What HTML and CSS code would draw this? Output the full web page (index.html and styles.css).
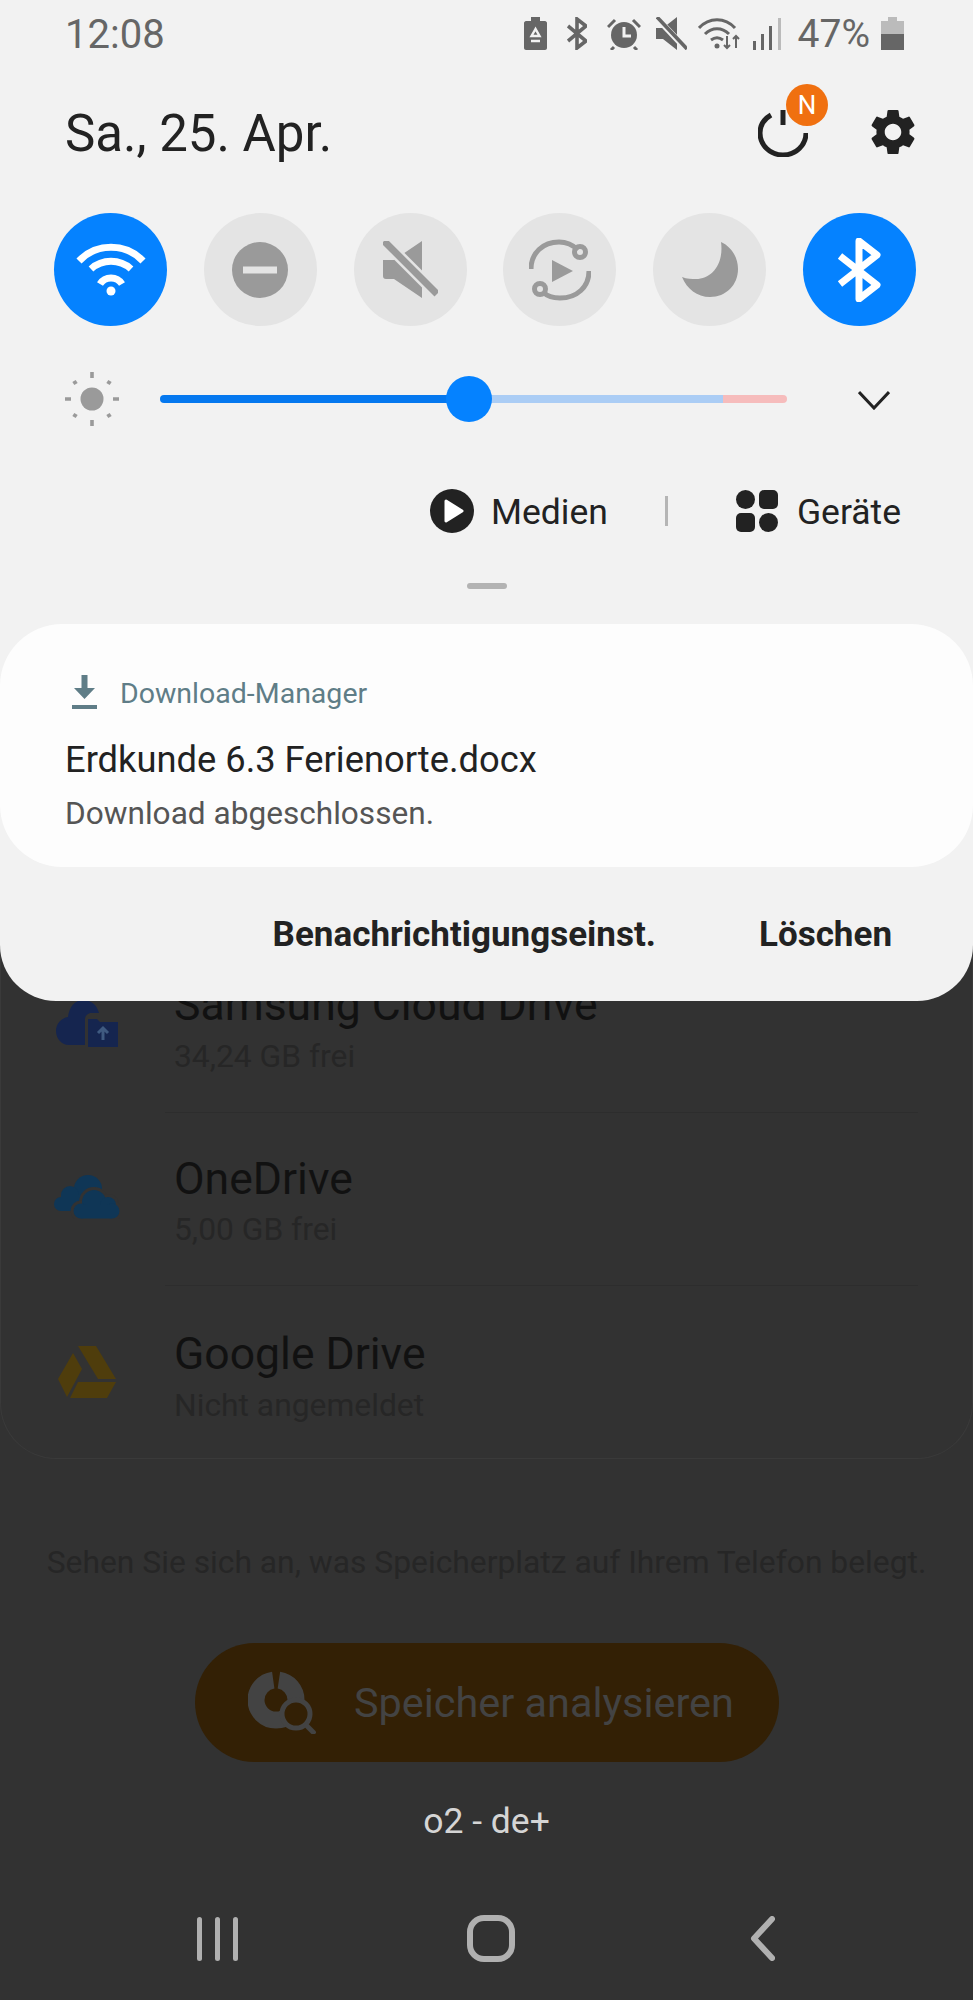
FILE: index.html
```html
<!DOCTYPE html>
<html lang="de">
<head>
  <meta charset="UTF-8" />
  <meta name="viewport" content="width=device-width, initial-scale=1" />
  <title>Benachrichtigungen</title>
  <link rel="stylesheet" href="styles.css">
</head>
<body>
  <!-- dimmed app behind the panel -->
  <main class="app">
    <section class="storage">
      <div class="row">
        <svg class="row-icon" width="62" height="48" viewBox="0 0 62 48"><path fill="#15254f" d="M27 0c8 0 14 5 16 13h-8c-3 0-6 3-6 6v26H13C6 45 0 39 0 31c0-7 5-13 12-14C13 7 19 0 27 0z"/><path fill="#15254f" d="M32 19h9l3 3h18v25H32z"/><path fill="none" stroke="#3f5a80" stroke-width="3" d="M47 40V29M42 33l5-5 5 5"/></svg>
        <div class="row-body">
          <div class="row-title">Samsung Cloud Drive</div>
          <div class="row-sub">34,24 GB frei</div>
        </div>
      </div>
      <div class="row">
        <svg class="row-icon" width="66" height="44" viewBox="0 0 66 44"><g fill="#0f3656"><circle cx="34" cy="14" r="14"/><circle cx="16" cy="20" r="9"/><circle cx="7" cy="29" r="7"/><rect x="7" y="20" width="30" height="16"/></g><g fill="#323232" stroke="#323232" stroke-width="6"><circle cx="40" cy="27" r="12"/><circle cx="54" cy="30" r="8"/><circle cx="27" cy="36" r="7.500"/><circle cx="58" cy="36" r="7.500"/><rect x="27" y="30" width="31" height="13.500"/></g><g fill="#0f3656"><circle cx="40" cy="27" r="12"/><circle cx="54" cy="30" r="8"/><circle cx="27" cy="36" r="7.500"/><circle cx="58" cy="36" r="7.500"/><rect x="27" y="30" width="31" height="13.500"/></g></svg>
        <div class="row-body">
          <div class="row-title">OneDrive</div>
          <div class="row-sub">5,00 GB frei</div>
        </div>
      </div>
      <div class="row">
        <svg class="row-icon" width="58" height="52" viewBox="0 0 58 52"><path fill="#4f3d0c" d="M20 0h18l20 33H40zM15 7l9 16L9 51 0 33zM20 36h38l-9 16H12z"/></svg>
        <div class="row-body no-line">
          <div class="row-title">Google Drive</div>
          <div class="row-sub">Nicht angemeldet</div>
        </div>
      </div>
    </section>

    <p class="note">Sehen Sie sich an, was Speicherplatz auf Ihrem Telefon belegt.</p>

    <div class="analyse">
      <svg width="68" height="63" viewBox="0 0 68 63"><circle cx="28" cy="29" r="20" fill="none" stroke="#434343" stroke-width="17" stroke-dasharray="119 7" stroke-dashoffset="-3" transform="rotate(-90 28 29)"/><circle cx="48" cy="43" r="14" fill="#332005" stroke="#434343" stroke-width="5"/><path stroke="#434343" stroke-width="5" d="M57 53l10 10"/></svg>
      <span>Speicher analysieren</span>
    </div>

    <div class="carrier">o2 - de+</div>

    <nav class="navbar">
      <div class="nav-recent"><i></i><i></i><i></i></div>
      <div class="nav-home"></div>
      <svg width="25" height="45" viewBox="0 0 25 45"><path fill="none" stroke="#b0b0b0" stroke-width="6" stroke-linecap="round" stroke-linejoin="round" d="M22 3L4 22.5 22 42"/></svg>
    </nav>
  </main>

  <!-- notification shade -->
  <div class="panel">
    <div class="status">
      <span class="clock">12:08</span>
      <div class="status-icons">
        <svg class="i-saver" width="23" height="33" viewBox="0 0 23 33"><path fill="#666" d="M7 0h9v4h5c1 0 2 1 2 2v25c0 1-1 2-2 2H2c-1 0-2-1-2-2V6c0-1 1-2 2-2h5z"/><path fill="none" stroke="#f2f2f2" stroke-width="2.4" d="M11.500 12l-4 7h8zM7 24h9"/></svg>
        <svg class="i-bt" width="20" height="33" viewBox="0 0 20 33"><path fill="none" stroke="#666" stroke-width="3.600" d="M1 9l18 15-9 7V2l9 7L1 24"/></svg>
        <svg class="i-alarm" width="34" height="33" viewBox="0 0 34 33"><circle cx="17" cy="18" r="13" fill="#666"/><path fill="none" stroke="#f2f2f2" stroke-width="3" d="M17 10v9h7"/><path fill="none" stroke="#666" stroke-width="3" d="M1 10l7-7M33 10l-7-7M7 30l-3 3M27 30l3 3"/></svg>
        <svg class="i-mute" width="31" height="33" viewBox="0 0 31 33"><path fill="#666" d="M0 11h7L21 0v33L7 22H0z"/><path stroke="#f2f2f2" stroke-width="6" d="M0 0l31 33"/><path stroke="#666" stroke-width="3.600" d="M1 0l30 32"/></svg>
        <svg class="i-wifi" width="44" height="33" viewBox="0 0 44 33"><g fill="none" stroke="#666" stroke-width="3"><path d="M1 11c10-11 26-11 36 0"/><path d="M7 17c7-7 17-7 24 0"/><path d="M13 23c4-3 8-3 12 0"/></g><circle cx="19" cy="29" r="2.500" fill="#666"/><path fill="none" stroke="#666" stroke-width="2" d="M29 19v12M26 28l3 3 3-3M38 31V19M35 22l3-3 3 3"/></svg>
        <svg class="i-signal" width="29" height="33" viewBox="0 0 29 33"><rect y="24" width="3" height="9" fill="#666"/><rect x="8" y="17" width="3" height="16" fill="#666"/><rect x="16" y="9" width="3" height="24" fill="#666"/><rect x="25" y="1" width="3" height="32" fill="#bbb"/></svg>
        <span class="percent">47%</span>
        <svg class="i-batt" width="23" height="33" viewBox="0 0 23 33"><path fill="#bbb" d="M7 0h9v4h7v13H0V4h7z"/><rect y="17" width="23" height="16" fill="#666"/></svg>
      </div>
    </div>

    <div class="head">
      <span class="date">Sa., 25. Apr.</span>
      <div class="head-actions">
        <div class="power">
          <svg width="50" height="48" viewBox="0 0 50 48"><path fill="none" stroke="#222" stroke-width="5" d="M13 6C6 10 2 16 2 24c0 12 10 22 23 22s23-10 23-22"/><path stroke="#222" stroke-width="5" d="M25 1v15"/></svg>
          <span class="badge">N</span>
        </div>
        <svg class="gear" width="46" height="46" viewBox="2.500 2 19 20"><path fill="#222" d="M19.140 12.940c.04-.3.06-.61.06-.94 0-.32-.02-.64-.07-.94l2.030-1.580c.18-.14.23-.41.12-.61l-1.920-3.320c-.12-.22-.37-.29-.59-.22l-2.390.96c-.5-.38-1.030-.7-1.620-.94l-.36-2.540c-.04-.24-.24-.41-.48-.41h-3.840c-.24 0-.43.17-.47.41l-.36 2.540c-.59.24-1.130.57-1.620.94l-2.390-.96c-.22-.08-.47 0-.59.22L2.740 8.870c-.12.21-.08.47.12.61l2.030 1.580c-.05.3-.09.63-.09.94s.02.64.07.94l-2.030 1.580c-.18.14-.23.41-.12.61l1.920 3.320c.12.22.37.29.59.22l2.390-.96c.5.38 1.030.7 1.620.94l.36 2.540c.05.24.24.41.48.41h3.840c.24 0 .44-.17.47-.41l.36-2.540c.59-.24 1.130-.56 1.620-.94l2.390.96c.22.08.47 0 .59-.22l1.920-3.320c.12-.22.07-.47-.12-.61l-2.010-1.580zM12 15.600c-1.980 0-3.600-1.620-3.600-3.600s1.620-3.600 3.600-3.600 3.600 1.620 3.600 3.600-1.620 3.600-3.600 3.600z"/></svg>
      </div>
    </div>

    <div class="toggles">
      <div class="toggle on">
        <svg width="70" height="54" viewBox="0 0 70 54"><g fill="none" stroke="#fff" stroke-width="7"><path d="M3 18a44 44 0 0 1 64 0"/><path d="M15 26a30 30 0 0 1 40 0"/><path d="M24 41a13 13 0 0 1 22 0"/></g><circle cx="35" cy="48" r="4.500" fill="#fff"/></svg>
      </div>
      <div class="toggle">
        <svg width="56" height="56" viewBox="0 0 56 56"><circle cx="28" cy="28" r="28" fill="#9a9a9a"/><rect x="11" y="24.500" width="34" height="7" fill="#e4e4e4"/></svg>
      </div>
      <div class="toggle">
        <svg width="55" height="57" viewBox="0 0 55 57"><path fill="#9a9a9a" d="M0 19h11L39 0v57L11 38H3c-2 0-3-1-3-3z"/><path stroke="#e4e4e4" stroke-width="12" d="M1 0l53 53"/><path stroke="#9a9a9a" stroke-width="7" d="M1 0l53 53"/></svg>
      </div>
      <div class="toggle">
        <svg width="62" height="62" viewBox="0 0 62 62"><g fill="none" stroke="#9a9a9a" stroke-width="5"><path d="M2 30C2 14 14 3 30 3c8 0 14 3 19 8"/><path d="M60 32c0 16-12 27-29 27-8 0-13-2-17-6"/><circle cx="51" cy="13" r="5.500"/><circle cx="11" cy="50" r="5.500"/></g><path fill="#9a9a9a" d="M23 21l21 11-21 11z"/></svg>
      </div>
      <div class="toggle">
        <svg width="56" height="55" viewBox="0 0 56 55"><path fill="#9a9a9a" d="M39 0c11 5 17 16 17 27 0 16-12 28-28 28C15 55 5 47 0 35c5 2 10 2 14 2 16 0 28-15 25-37z"/></svg>
      </div>
      <div class="toggle on">
        <svg width="44" height="64" viewBox="0 0 44 64"><path fill="none" stroke="#fff" stroke-width="7" stroke-linejoin="round" d="M3 18l37 29-18 14V3l18 14L3 46"/></svg>
      </div>
    </div>

    <div class="brightness">
      <svg class="sun" width="54" height="54" viewBox="0 0 54 54"><circle cx="27" cy="27" r="11.500" fill="#9a9a9a"/><path stroke="#9a9a9a" stroke-width="3.600" d="M27 0v6M27 48v6M0 27h6M48 27h6"/><path stroke="#9a9a9a" stroke-width="4" d="M9 9l2 3M45 9l-2 3M9 45l2-3M45 45l-2-3"/></svg>
      <div class="slider">
        <div class="slider-fill"></div>
        <div class="slider-rest"></div>
        <div class="slider-hot"></div>
        <div class="slider-thumb"></div>
      </div>
      <svg class="chevron" width="32" height="20" viewBox="0 0 32 20"><path fill="none" stroke="#222" stroke-width="3" d="M1 2l15 16L31 2"/></svg>
    </div>

    <div class="media">
      <svg width="44" height="44" viewBox="0 0 44 44"><circle cx="22" cy="22" r="22" fill="#222"/><path fill="#fff" stroke="#fff" stroke-width="3" stroke-linejoin="round" d="M16 12l16 10-16 10z"/></svg>
      <span class="media-label label-media">Medien</span>
      <span class="media-sep"></span>
      <div class="devices"><i></i><i class="sq"></i><i class="sq"></i><i></i></div>
      <span class="media-label label-devices">Geräte</span>
    </div>

    <div class="handle"></div>

    <div class="notif">
      <div class="notif-app">
        <svg width="25" height="34" viewBox="0 0 25 34"><path fill="#5f7d87" d="M9.500 0h6v13H23L12.500 24 2 13h7.500zM0 30h25v4H0z"/></svg>
        <span>Download-Manager</span>
      </div>
      <div class="notif-title">Erdkunde 6.3 Ferienorte.docx</div>
      <div class="notif-text">Download abgeschlossen.</div>
    </div>

    <div class="actions">
      <span>Benachrichtigungseinst.</span>
      <span>Löschen</span>
    </div>
  </div>
</body>
</html>
```

FILE: styles.css
```css
* {
  box-sizing: border-box;
}
html, body {
  margin: 0;
  padding: 0;
}
body {
  position: relative;
  width: 973px;
  height: 2000px;
  overflow: hidden;
  background: #323232;
  font-family: Roboto, 'Noto Sans', sans-serif;
}
svg {
  display: block;
  flex: none;
}

/* app behind the shade */
.app {
  padding-top: 940px;
}
.storage {
  height: 519px;
  border: 1px solid #3a3a3a;
  border-top: none;
  border-radius: 0 0 56px 56px;
}
.row {
  display: flex;
  height: 173px;
}
.row:nth-child(1) .row-icon {
  margin: 60px 47px 0 55px;
}
.row:nth-child(2) .row-icon {
  margin: 62px 45px 0 53px;
}
.row:nth-child(3) .row-icon {
  margin: 60px 49px 0 57px;
}
.row-body {
  flex: 1;
  margin-right: 54px;
  padding: 40px 0 0 9px;
  border-bottom: 1px solid #2d2d2d;
}
.row:nth-child(2) .row-title {
  padding-top: 1px;
  margin-bottom: -1px;
}
.row-body.no-line {
  padding-top: 43px;
  border-bottom: none;
}
.row-title {
  font-size: 44.5px;
  line-height: 50px;
  color: #111;
}
.row-sub {
  margin-top: 6px;
  font-size: 31.8px;
  line-height: 40px;
  color: #262626;
}
.note {
  margin: 83px 0 0;
  font-size: 31.8px;
  line-height: 40px;
  color: #262626;
  text-align: center;
  white-space: nowrap;
}
.analyse {
  display: flex;
  align-items: center;
  gap: 38px;
  width: 584px;
  height: 119px;
  margin: 61px 0 0 195px;
  padding-left: 53px;
  border-radius: 60px;
  background: #332005;
  font-size: 41.4px;
  color: #434343;
}
.carrier {
  margin-top: 37px;
  font-size: 35.5px;
  line-height: 44px;
  color: #d5d5d5;
  text-align: center;
}
.navbar {
  display: flex;
  align-items: center;
  justify-content: space-between;
  height: 47px;
  margin: 72px 198px 0 197px;
}
.nav-recent {
  display: flex;
  gap: 13px;
}
.nav-recent i {
  display: block;
  width: 5px;
  height: 44px;
  border-radius: 3px;
  background: #b0b0b0;
}
.nav-home {
  width: 48px;
  height: 47px;
  margin-right: 6px;
  border: 6px solid #b0b0b0;
  border-radius: 17px;
}

/* notification shade */
.panel {
  position: absolute;
  top: 0;
  left: 0;
  width: 973px;
  height: 1001px;
  border-radius: 0 0 56px 56px;
  background: #f2f2f2;
}
.status {
  display: flex;
  align-items: center;
  justify-content: space-between;
  height: 66px;
  padding: 0 69px 0 65px;
  color: #666;
}
.clock {
  padding-top: 2px;
  font-size: 40px;
}
.status-icons {
  display: flex;
  align-items: center;
}
.i-bt, .i-alarm {
  margin-left: 20px;
}
.i-mute {
  margin-left: 15px;
}
.i-wifi, .i-signal, .i-batt {
  margin-left: 11px;
}
.percent {
  margin-left: 16px;
  padding-top: 2px;
  font-size: 39px;
}
.head {
  display: flex;
  align-items: center;
  justify-content: space-between;
  height: 132px;
  padding: 0 57px 0 65px;
}
.date {
  padding-top: 3px;
  font-size: 51px;
  color: #222;
}
.head-actions {
  display: flex;
  align-items: center;
  gap: 62px;
}
.power {
  position: relative;
  margin-top: 2px;
}
.badge {
  position: absolute;
  top: -25px;
  left: 28px;
  width: 42px;
  height: 42px;
  border-radius: 50%;
  background: #f07010;
  color: #fff;
  font-size: 26px;
  line-height: 42px;
  text-align: center;
}
.toggles {
  display: flex;
  justify-content: space-between;
  margin-top: 15px;
  padding: 0 57px 0 54px;
}
.toggle {
  display: flex;
  align-items: center;
  justify-content: center;
  width: 113px;
  height: 113px;
  border-radius: 50%;
  background: #e4e4e4;
}
.toggle.on {
  background: #0582ff;
}
.brightness {
  display: flex;
  align-items: center;
  height: 46px;
  margin-top: 50px;
  padding-left: 65px;
}
.slider {
  position: relative;
  display: flex;
  width: 627px;
  height: 8px;
  margin-left: 41px;
}
.slider-fill {
  width: 309px;
  border-radius: 4px 0 0 4px;
  background: #0578ef;
}
.slider-rest {
  width: 254px;
  background: #abcdf5;
}
.slider-hot {
  flex: 1;
  border-radius: 0 4px 4px 0;
  background: #f6bcbc;
}
.slider-thumb {
  position: absolute;
  top: -19px;
  left: 286px;
  width: 46px;
  height: 46px;
  border-radius: 50%;
  background: #0582ff;
}
.chevron {
  margin: 2px 0 0 71px;
}
.media {
  display: flex;
  align-items: center;
  justify-content: flex-end;
  height: 44px;
  margin-top: 67px;
  padding-right: 72px;
}
.media-label {
  padding-top: 2px;
  font-size: 35.5px;
  color: #222;
}
.label-media {
  margin-left: 17px;
}
.label-devices {
  margin-left: 19px;
}
.media-sep {
  width: 3px;
  height: 30px;
  margin: 0 68px 0 57px;
  background: #b5b5b5;
}
.devices {
  display: grid;
  grid-template-columns: 19px 19px;
  gap: 4px;
}
.devices i {
  display: block;
  width: 19px;
  height: 19px;
  border-radius: 50%;
  background: #222;
}
.devices i.sq {
  border-radius: 5px;
}
.handle {
  width: 40px;
  height: 6px;
  margin: 50px auto 0;
  border-radius: 3px;
  background: #b3b3b3;
}
.notif {
  height: 243px;
  margin-top: 35px;
  padding: 51px 65px 0;
  border-radius: 62px;
  background: #fdfdfd;
}
.notif-app {
  display: flex;
  align-items: center;
  gap: 23px;
  height: 34px;
  padding-left: 7px;
  font-size: 28.5px;
  color: #5f7d87;
}
.notif-app span {
  padding-top: 2px;
}
.notif-title {
  margin-top: 29px;
  font-size: 36.3px;
  line-height: 44px;
  color: #222;
}
.notif-text {
  margin-top: 12px;
  font-size: 31.6px;
  line-height: 40px;
  color: #555;
}
.actions {
  display: flex;
  align-items: center;
  justify-content: flex-end;
  gap: 103px;
  height: 134px;
  padding-right: 81px;
  font-size: 35px;
  font-weight: 700;
  color: #222;
}
```
